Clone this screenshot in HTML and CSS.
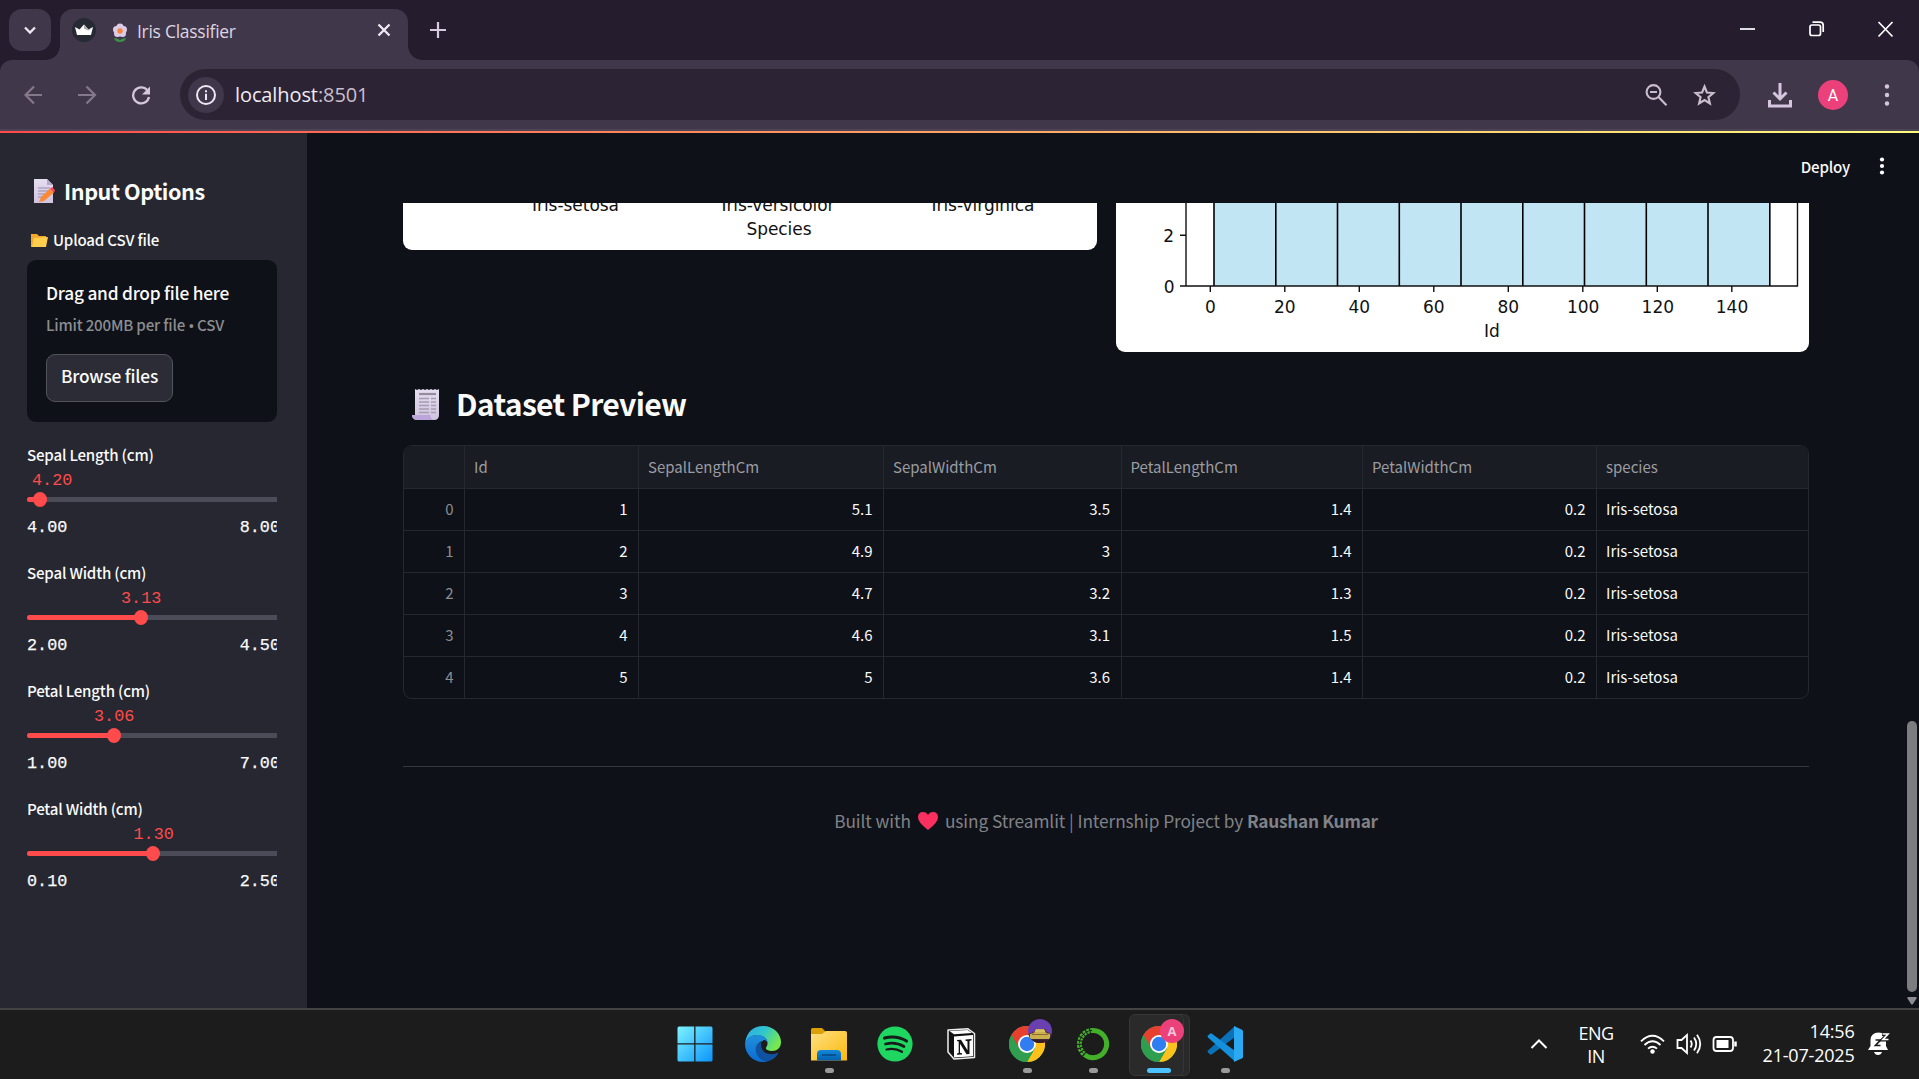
FILE: index.html
```html
<!DOCTYPE html>
<html lang="en">
<head>
<meta charset="utf-8">
<title>Iris Classifier</title>
<link rel="stylesheet" href="styles.css">
</head>
<body>
<svg width="0" height="0" class="defs" aria-hidden="true">
  <defs>
    <linearGradient id="win" x1="0" y1="0" x2="1" y2="1"><stop offset="0" stop-color="#7df3ff"/><stop offset="1" stop-color="#0a95fb"/></linearGradient>
    <linearGradient id="edgeTop" x1="0" y1="0" x2="1" y2=".5"><stop offset="0" stop-color="#2fa8e8"/><stop offset=".5" stop-color="#2fc5cf"/><stop offset="1" stop-color="#76e84f"/></linearGradient>
    <linearGradient id="edgeLow" x1="0" y1="0" x2="0" y2="1"><stop offset="0" stop-color="#2290dc"/><stop offset="1" stop-color="#0a6bd0"/></linearGradient>
    <linearGradient id="folder" x1="0" y1="0" x2="1" y2="1"><stop offset="0" stop-color="#ffe083"/><stop offset="1" stop-color="#fbb90c"/></linearGradient>
    <linearGradient id="folderBlue" x1="0" y1="0" x2="0" y2="1"><stop offset="0" stop-color="#1289dc"/><stop offset="1" stop-color="#0560ae"/></linearGradient>
    <linearGradient id="paper" x1="0" y1="0" x2="0" y2="1"><stop offset="0" stop-color="#e5def0"/><stop offset="1" stop-color="#cfc3de"/></linearGradient>
    <g id="chrome">
      <circle cx="18" cy="18" r="18" fill="#2f9e4f"/>
      <path d="M2.4 9A18 18 0 0 1 33.6 9L18 9.5 10.2 22.5z" fill="#e8402f"/>
      <path d="M33.6 9A18 18 0 0 1 18 36L25.8 22.5 18 9z" fill="#fcc21b"/>
      <path d="M2.4 9A18 18 0 0 0 18 36L25.8 22.5 10.2 22.5z" fill="#2f9e4f"/>
      <circle cx="18" cy="18" r="9" fill="#fff"/><circle cx="18" cy="18" r="7.2" fill="#2f7df0"/>
    </g>
  </defs>
</svg>

<header class="tabstrip">
  <div class="tabsearch"><svg width="42" height="42" viewBox="0 0 42 42"><path d="M16 18.5l5 5 5-5" fill="none" stroke="#eee6f2" stroke-width="2.3"/></svg></div>
  <div class="tab">
    <svg class="favicon" width="24" height="24" viewBox="0 0 24 24"><circle cx="12" cy="12" r="12" fill="#262a33"/><path d="M3 9l4.500 2.500L12 6.500l4.500 5L21 9l-2 8H5z" fill="#fff"/><path d="M12 6.500l4.500 5L21 9l-4.500 3.500-4.500-2z" fill="#aaa"/></svg>
    <svg class="flower" width="16" height="20" viewBox="0 0 16 20"><g fill="#decbe9"><circle cx="8" cy="4" r="3.600"/><circle cx="4.500" cy="6.500" r="3.500"/><circle cx="11.500" cy="6.500" r="3.500"/><circle cx="5.500" cy="10.500" r="3.500"/><circle cx="10.500" cy="10.500" r="3.500"/></g><circle cx="8" cy="8" r="2.700" fill="#f98433"/><path d="M2 15q3 0 6 2 3-2 6-2-1 4-6 4t-6-4z" fill="#3e9146"/></svg>
    <span class="tabtitle">Iris Classifier</span>
    <svg class="tabclose" width="14" height="14" viewBox="0 0 14 14"><path d="M1.500 1.500l11 11M12.500 1.500l-11 11" stroke="#f0e9f4" stroke-width="2.300"/></svg>
  </div>
  <svg class="newtab" width="16" height="16" viewBox="0 0 16 16"><path d="M8 0v16M0 8h16" stroke="#d9c9e0" stroke-width="2.200"/></svg>
  <svg class="winbtns" width="154" height="18" viewBox="0 0 154 18" fill="none" stroke="#fff" stroke-width="1.700"><path d="M0 9h15"/><rect x="70" y="5" width="10.500" height="10.500" rx="2"/><path d="M72.500 2.200H80q3.200 0 3.200 3.200V12"/><path d="M138.500 2l14 14.500M152.500 2l-14 14.500"/></svg>
</header>

<div class="toolbar">
  <svg class="nav" width="130" height="20" viewBox="0 0 130 20" fill="none" stroke-width="2.200"><g stroke="#847989"><path d="M18 10H2M10 1.500L1.500 10l8.500 8.500"/><path d="M54 10h16.500M62.500 1.500L71 10l-8.500 8.500"/></g><path d="M123.300 5.200A8 8 0 1 0 125 12" stroke="#d5c6dc" stroke-width="2.300"/><path d="M126 1.500v8h-8z" fill="#d5c6dc"/></svg>
  <div class="omnibox">
    <div class="info"><svg width="20" height="20" viewBox="0 0 20 20"><circle cx="10" cy="10" r="9" fill="none" stroke="#eee7f1" stroke-width="2"/><path d="M10 8.800v6.200M10 5.200v2" stroke="#eee7f1" stroke-width="2"/></svg></div>
    <span class="url">localhost<span class="port">:8501</span></span>
    <svg class="omniicons" width="72" height="24" viewBox="0 0 72 24" fill="none" stroke="#c9bfcc" stroke-width="2.100"><circle cx="8.500" cy="9" r="6.900"/><path d="M13.500 14l8 8.300M5 9h7"/><path d="M59.500 3.500l2.400 6 6.400.500-4.900 4.100 1.500 6.400-5.400-3.400-5.400 3.400 1.500-6.400L50.700 10l6.400-.500z"/></svg>
  </div>
  <svg class="download" width="24" height="25" viewBox="0 0 24 25" fill="none" stroke="#d5c5df" stroke-width="3"><path d="M12 0v15M5.500 9.500L12 16l6.500-6.500M1.500 17v6h21v-6"/></svg>
  <div class="avatar">A</div>
  <svg class="kebab" width="6" height="24" viewBox="0 0 6 24" fill="#d5c5df"><circle cx="3" cy="3.500" r="2.200"/><circle cx="3" cy="12" r="2.200"/><circle cx="3" cy="20.500" r="2.200"/></svg>
</div>
<div class="rainbow"></div>

<div class="app">
  <aside class="sidebar">
    <h2 class="sidehead"><svg width="22" height="25" viewBox="0 0 22 25"><path d="M1 0h13l6 6v18H1z" fill="url(#paper)"/><path d="M14 0v6h6z" fill="#b6a9c7"/><path d="M5 9h12M5 12h12M5 15h10M5 18h6" stroke="#998ba9"/><path d="M6 23l2-5L17 9.500l4 4L11 22z" fill="#fb8a36"/><path d="M17 9.500l2.200-1.500 3 3.500-1.500 2z" fill="#f4475d"/></svg><span>Input Options</span></h2>
    <div class="label upload"><svg width="17" height="15" viewBox="0 0 17 15"><path d="M0 1h6l2 2h7v11H0z" fill="#f3a72c"/><path d="M3 5l14-1-2 10H1z" fill="#ffce4c"/></svg><span>Upload CSV file</span></div>
    <div class="dropzone">
      <div class="dragtext"><span>Drag and drop file here</span></div>
      <div class="limit"><span>Limit 200MB per file <span class="dot">•</span> CSV</span></div>
      <button class="browse">Browse files</button>
    </div>
    <div class="slider"><div class="label"><span>Sepal Length (cm)</span></div><div class="value" style="margin-left:5px">4.20</div><div class="track"><div class="fill" style="width:12.500px"></div></div><div class="range"><span>4.00</span><span>8.00</span></div></div>
    <div class="slider"><div class="label"><span>Sepal Width (cm)</span></div><div class="value" style="margin-left:94px">3.13</div><div class="track"><div class="fill" style="width:114px"></div></div><div class="range"><span>2.00</span><span>4.50</span></div></div>
    <div class="slider"><div class="label"><span>Petal Length (cm)</span></div><div class="value" style="margin-left:67px">3.06</div><div class="track"><div class="fill" style="width:86.500px"></div></div><div class="range"><span>1.00</span><span>7.00</span></div></div>
    <div class="slider"><div class="label"><span>Petal Width (cm)</span></div><div class="value" style="margin-left:106.500px">1.30</div><div class="track"><div class="fill" style="width:126px"></div></div><div class="range"><span>0.10</span><span>2.50</span></div></div>
  </aside>

  <main class="main">
    <div class="apphead"><span class="deploy">Deploy</span><svg width="6" height="18" viewBox="0 0 6 18" fill="#fff"><circle cx="3" cy="2.500" r="2.100"/><circle cx="3" cy="9" r="2.100"/><circle cx="3" cy="15.500" r="2.100"/></svg></div>
    <div class="charts">
      <svg class="card" width="694" height="47" viewBox="403 203 694 47" font-family="DejaVu Sans" font-size="17" fill="#111">
        <text x="532" y="210.700" textLength="87">Iris-setosa</text><text x="721.500" y="210.700" textLength="113">Iris-versicolor</text><text x="931.500" y="210.700" textLength="103">Iris-virginica</text><text x="746.500" y="234.500" textLength="65">Species</text>
      </svg>
      <svg class="card" width="693" height="149" viewBox="1116 203 693 149" font-family="DejaVu Sans" font-size="17" fill="#111">
        <rect x="1214" y="200" width="556" height="86" fill="#c1e5f3"/>
        <path d="M1214 200v86M1275.800 200v86M1337.500 200v86M1399.300 200v86M1461 200v86M1522.800 200v86M1584.500 200v86M1646.300 200v86M1708 200v86M1769.800 200v86" stroke="#000" stroke-width="1.600"/>
        <path d="M1186 200v86.500M1797.500 200v86.500M1180 286h618M1180 235.300h6M1210.300 286v6M1284.800 286v6M1359.300 286v6M1433.800 286v6M1508.300 286v6M1582.800 286v6M1657.300 286v6M1731.800 286v6" stroke="#111" stroke-width="1.400" fill="none"/>
        <g text-anchor="end"><text x="1174" y="241.800">2</text><text x="1174.500" y="293.200">0</text></g>
        <g text-anchor="middle"><text x="1210.300" y="312.500">0</text><text x="1284.800" y="312.500">20</text><text x="1359.300" y="312.500">40</text><text x="1433.800" y="312.500">60</text><text x="1508.300" y="312.500">80</text><text x="1583.200" y="312.500">100</text><text x="1657.800" y="312.500">120</text><text x="1732" y="312.500">140</text><text x="1491.800" y="336.500">Id</text></g>
      </svg>
    </div>
    <h1 class="heading"><svg width="28" height="33" viewBox="0 0 28 33"><path d="M3 1l2 1 2-1 2 1 2-1 2 1 2-1 2 1 2-1 2 1 2-1 2 1 2-1v26q0 5-5 5H6q-6 0-6-5h3z" fill="url(#paper)"/><path d="M0 27h18q1 5 5 5H6q-6 0-6-5z" fill="#bba5da"/><path d="M7 6h17" stroke="#958d9f" stroke-width="2.200"/><path d="M7 10.500h10M19 10.500h5M7 14h10M19 14h5M7 17.500h10M19 17.500h5M7 21h10M19 21h5M7 24.500h10M19 24.500h5" stroke="#a69db3" stroke-width="1.300"/></svg><span>Dataset Preview</span></h1>
    <div class="table">
      <div class="row head"><div></div><div>Id</div><div>SepalLengthCm</div><div>SepalWidthCm</div><div>PetalLengthCm</div><div>PetalWidthCm</div><div>species</div></div>
      <div class="row"><div>0</div><div>1</div><div>5.1</div><div>3.5</div><div>1.4</div><div>0.2</div><div>Iris-setosa</div></div>
      <div class="row"><div>1</div><div>2</div><div>4.9</div><div>3</div><div>1.4</div><div>0.2</div><div>Iris-setosa</div></div>
      <div class="row"><div>2</div><div>3</div><div>4.7</div><div>3.2</div><div>1.3</div><div>0.2</div><div>Iris-setosa</div></div>
      <div class="row"><div>3</div><div>4</div><div>4.6</div><div>3.1</div><div>1.5</div><div>0.2</div><div>Iris-setosa</div></div>
      <div class="row"><div>4</div><div>5</div><div>5</div><div>3.6</div><div>1.4</div><div>0.2</div><div>Iris-setosa</div></div>
    </div>
    <hr class="rule">
    <footer class="credit"><span>Built with</span><svg width="20" height="18" viewBox="0 0 20 18"><path d="M10 18Q0 10.500 0 5.500 0 0 5 0q3.500 0 5 3 1.500-3 5-3 5 0 5 5.500 0 5-10 12.500z" fill="#f92f60"/></svg><span>using Streamlit | Internship Project by <b>Raushan Kumar</b></span></footer>
    <div class="scroll"><div class="thumb"></div><svg width="10" height="8" viewBox="0 0 10 8"><path d="M1 0h8q1 0 .500 1.500L6 7q-1 1-2 0L.500 1.500Q0 0 1 0z" fill="#8b8c8f"/></svg></div>
  </main>
</div>

<div class="taskbar">
  <div class="apps">
    <div class="slot first"><svg width="36" height="36" viewBox="0 0 36 36"><path d="M2 .500h15.200v16.700H.500V2Q.500.500 2 .500zM18.500.500H34q1.500 0 1.500 1.500v15.200h-17zM.500 18.500h16.700v17H2Q.500 35.500.500 34zM18.500 18.500h17V34q0 1.500-1.500 1.500H18.500z" fill="url(#win)"/></svg></div>
    <div class="slot"><svg width="36" height="36" viewBox="0 0 36 36"><path d="M0 17C2 5 9 0 18 0c11 0 18 8 18 16 0 6-4 9-9 9-5 0-7-2-6-4 3-5 1-9-4-11C10 8 3 10 0 17z" fill="url(#edgeTop)"/><path d="M0 18C1 12 6 9 12 9c8 0 12 5 10 11-1-4-5-6-8-3-5 6 0 16 8 18.500Q20 36 18 36C8 36 0 28 0 18z" fill="url(#edgeLow)"/><path d="M14 17C8 20 10 33 21 35.700c5-.700 9-3.500 12-7.700q.500-1.500-1-1c-7 3-13 0-15-4-1-2-1-4 0-7z" fill="#0f529f"/><path d="M17 15.500q3-3 5 .500 1 3-1 5.500-1 3 4 3.700-5 .300-7.500-3.200-2-3.500-.500-6.500z" fill="#1c1c1c"/></svg></div>
    <div class="slot running"><svg width="36" height="36" viewBox="0 0 36 36"><path d="M0 3.500Q0 2 1.500 2H11l4 4-3 3H0z" fill="#dda006"/><path d="M0 8h11l4-3h19q2 0 2 2v27.500H0z" fill="url(#folder)"/><path d="M6 34.500V28q0-4 4-4h16q4 0 4 4v6.500z" fill="url(#folderBlue)"/><path d="M11 29h14" stroke="#06477e" stroke-width="1.500"/></svg></div>
    <div class="slot"><svg width="36" height="36" viewBox="0 0 36 36"><circle cx="18" cy="18" r="17.600" fill="#1fd760"/><g fill="none" stroke="#171c1b" stroke-linecap="round"><path d="M7.500 12q12-3 22 3" stroke-width="3.200"/><path d="M8.500 18q10-2.500 18.500 2.500" stroke-width="2.700"/><path d="M9.500 23.500q8.500-2 15.500 2.300" stroke-width="2.200"/></g></svg></div>
    <div class="slot"><svg width="36" height="36" viewBox="0 0 36 36"><path d="M5 4l20-1.200L31.500 7.500v24L11 33 5 26z" fill="#111" stroke="#eee" stroke-width="1.500" stroke-linejoin="round"/><path d="M6.500 5L24.500 4l4.500 3-18 1.200z" fill="#fff"/><path d="M11 10.500L30 9v21.300L11 31.500z" fill="#fff"/><path d="M14 14l4-.300 6.500 10.500v-9l-2-.500v-1.200l6-.400v1.200l-2 .600v13l-3 .300-6.500-10.500v9l2 .500v1.200l-5 .300v-1.200l1.700-.500V15.500L14 15z" fill="#111"/></svg></div>
    <div class="slot running"><svg width="36" height="36" viewBox="0 0 36 36"><use href="#chrome"/></svg><svg class="badge" width="24" height="24" viewBox="0 0 24 24"><clipPath id="round"><circle cx="12" cy="12" r="12"/></clipPath><g clip-path="url(#round)"><path d="M0 0h24v24H0z" fill="#6a40b0"/><path d="M0 15l6-2 2-3h9l2 3 5 2v9H0z" fill="#513040"/><path d="M2 15l4-1 2-4h8l2 4 4 1v5H2z" fill="#c9b04d"/><path d="M4 15.500h16" stroke="#8c6b35"/><path d="M7 12h10" stroke="#e6d27a"/><path d="M0 20.500h24v3.500H0z" fill="#351c26"/></g></svg></div>
    <div class="slot running"><svg width="36" height="36" viewBox="0 0 36 36" fill="none"><path d="M18 4.400A13.600 13.600 0 1 1 9.500 28.600" stroke="#43b02a" stroke-width="5"/><path d="M18 4.400A13.600 13.600 0 0 0 9.500 28.600" stroke="#43b02a" stroke-width="5" stroke-dasharray="2.600 1.100"/><path d="M17 4.400A13.600 13.600 0 0 0 9.500 28.600" stroke="#1c1c1c" stroke-width="1" stroke-dasharray="2 1.500"/></svg></div>
    <div class="slot active"><svg width="36" height="36" viewBox="0 0 36 36"><use href="#chrome"/></svg><div class="badge pink">A</div></div>
    <div class="slot running"><svg width="36" height="36" viewBox="0 0 36 36"><path d="M1 24.500Q0 25.500 1 26.500l2 1.800q1 .700 2 0L28 11V0z" fill="#0a72b8"/><path d="M1 11.500Q0 10.500 1 9.500l2-1.800q1-.700 2 0L28 25v10.500z" fill="#1490dc"/><path d="M27 0l8 3.700q1 .500 1 1.500v25.600q0 1-1 1.500L27 36z" fill="#2baaf3"/></svg></div>
  </div>
  <div class="tray">
    <svg class="chev" width="18" height="12" viewBox="0 0 18 12"><path d="M1.500 10L9 2.500l7.500 7.500" fill="none" stroke="#fff" stroke-width="2"/></svg>
    <div class="lang">ENG<br>IN</div>
    <svg class="status" width="98" height="24" viewBox="0 0 98 24" fill="none" stroke="#fff" stroke-width="1.800"><path d="M1 9.300q11.500-11 23 0M4.500 13q8-7.500 16 0M8 16.700q4.500-4 9 0"/><circle cx="12.500" cy="19.500" r="2.200" fill="#fff" stroke="none"/><path d="M37.500 8h4l5.500-5v18l-5.500-5h-4zM50.500 8.500q2.500 3.500 0 7M54 5.500q4.500 6.500 0 13M57 2.800q6.500 9.200 0 18.400"/><rect x="73.500" y="5" width="19.500" height="14" rx="3"/><path d="M76.500 8h12v8h-12z" fill="#fff" stroke="none"/><path d="M95.500 9.500v5" stroke-width="2.500"/></svg>
    <div class="clock">14:56<br>21-07-2025</div>
    <svg class="bell" width="22" height="25" viewBox="0 0 22 25"><path d="M0 19l2.500-4V9Q3 1.500 10.500 1.500T18 9v6l2 4z" fill="#fff"/><path d="M6 21h8q-1 3-4 3t-4-3z" fill="#fff"/><path d="M7.500 9h5l-5 5.500h5" stroke="#1c1c1c" stroke-width="1.700" fill="none"/><path d="M14 3h6.500L15 8.500h6" stroke="#1c1c1c" stroke-width="4" fill="none"/><path d="M14.500 3h5.500L15 8.500h5.500" stroke="#fff" stroke-width="1.700" fill="none"/></svg>
  </div>
</div>
</body>
</html>
```
FILE: styles.css
```css
* { box-sizing: border-box; }
body { margin: 0; width: 1919px; height: 1079px; overflow: hidden; background: #251c2e; color: #fafafa; font-family: "Noto Sans CJK SC", "Noto Sans", sans-serif; }
svg { display: block; flex: none; }
.defs { position: absolute; }
span, .row > div { white-space: nowrap; }

.tabstrip { height: 60px; background: #251c2e; display: flex; align-items: flex-start; padding: 9px 0 0 9px; }
.tabsearch { width: 42px; height: 42px; border-radius: 13px; background: #41374a; }
.tab { position: relative; width: 348px; height: 51px; margin-left: 9px; background: #41374a; border-radius: 13px 13px 0 0; display: flex; align-items: flex-start; padding-left: 12px; }
.tab::before, .tab::after { content: ""; position: absolute; bottom: 0; width: 14px; height: 14px; }
.tab::before { left: -14px; background: radial-gradient(circle at 0 0, transparent 13.500px, #41374a 14px); }
.tab::after { right: -14px; background: radial-gradient(circle at 100% 0, transparent 13.500px, #41374a 14px); }
.favicon { margin-top: 9px; }
.flower { margin: 14px 0 0 16px; }
.tabtitle { font: 17.500px/26px "Open Sans", sans-serif; color: #ded4e2; margin: 9px 0 0 9px; width: 99px; letter-spacing: -0.280px; }
.tabclose { margin: 14px 0 0 141px; }
.newtab { margin: 13px 0 0 22px; }
.winbtns { margin: 11px 0 0 1294px; }

.toolbar { height: 71px; background: #41374a; border-radius: 12px 12px 0 0; border-bottom: 2px solid #4c4355; display: flex; align-items: flex-start; padding-left: 24px; }
.nav { margin-top: 25px; }
.omnibox { width: 1560px; height: 51px; margin: 9px 0 0 26px; border-radius: 26px; background: #2c2335; display: flex; align-items: center; padding-left: 8px; }
.info { width: 36px; height: 36px; border-radius: 50%; background: #41374a; display: grid; place-items: center; }
.url { font: 20px/28px "Open Sans", sans-serif; color: #f1eaf4; margin-left: 11px; width: 132px; letter-spacing: -0.100px; }
.port { color: #c9bfcc; }
.omniicons { margin-left: 1277.500px; }
.download { margin: 23px 0 0 28px; }
.avatar { width: 30px; height: 30px; margin: 20px 0 0 26px; border-radius: 50%; background: #ec407a; text-align: center; font: 16px/31px Roboto, sans-serif; color: #fff; }
.kebab { margin: 23px 0 0 36px; }
.rainbow { height: 2px; background: linear-gradient(90deg, #ff4b4b, #fffd80); }

.app { height: 875px; display: flex; }
.sidebar { width: 307px; height: 875px; background: #262730; padding: 46px 30px 0 27px; overflow: hidden; }
.sidehead { margin: 0; height: 25px; display: flex; align-items: center; gap: 9px; padding-left: 6px; font-size: 21.600px; line-height: 25px; font-weight: 700; letter-spacing: -0.420px; }
.sidehead span { margin-top: -2px; }
.label { height: 24px; display: flex; align-items: center; font-size: 15.100px; line-height: 24px; font-weight: 500; letter-spacing: -0.200px; }
.upload { margin-top: 24px; gap: 5px; padding-left: 4px; }
.upload span { margin-top: -2px; }
.dropzone { height: 162px; margin-top: 8px; background: #0e1117; border-radius: 9px; padding: 19px 0 0 19px; }
.dragtext { font-size: 17.300px; line-height: 28px; font-weight: 500; letter-spacing: -0.220px; }
.limit { font-size: 15.100px; line-height: 24px; margin-top: 5px; color: #8b8d91; font-weight: 500; letter-spacing: -0.180px; }
.dot { font-family: "Noto Sans", sans-serif; line-height: 1; }
.browse { display: block; width: 127px; height: 48px; margin: 18px 0 0; padding: 0 0 4px; border: 1px solid #52535b; border-radius: 9px; background: #2b2c36; color: #fafafa; font: 500 17.300px/42px "Noto Sans CJK SC", sans-serif; letter-spacing: -0.200px; }
.slider { height: 118px; width: 250px; overflow: hidden; }
.dropzone + .slider { margin-top: 20px; }
.value { height: 24px; margin-top: 2px; font: 16.800px/26px "Liberation Mono", monospace; color: #ff4b4b; }
.track { height: 5px; margin-top: 5px; background: #4b4c57; border-radius: 3px 0 0 3px; }
.fill { position: relative; height: 5px; background: #ff4b4b; border-radius: 3px; }
.fill::after { content: ""; position: absolute; right: -7px; top: -5px; width: 14px; height: 15px; border-radius: 50%; background: #ff4b4b; }
.range { display: flex; justify-content: space-between; width: 253px; margin-top: 14px; font: 16.800px/24px "Liberation Mono", monospace; -webkit-text-stroke: 0.250px #fafafa; }

.main { position: relative; width: 1612px; height: 875px; padding: 0 110px 0 96px; background: #0e1117; }
.apphead { height: 70px; display: flex; align-items: center; justify-content: flex-end; gap: 29px; margin-right: -76px; padding-bottom: 4px; font-size: 15.100px; font-weight: 500; letter-spacing: -0.200px; }
.deploy { margin-top: -1px; }
.charts { display: flex; align-items: flex-start; gap: 19px; height: 149px; }
.card { background: #fff; border-radius: 0 0 9px 9px; }
.heading { margin: 36px 0 0; height: 33px; padding-left: 9px; display: flex; align-items: center; gap: 16px; font-size: 30.200px; line-height: 33px; font-weight: 700; letter-spacing: -0.700px; }
.heading span { margin-top: -2px; }
.table { margin-top: 24px; height: 254px; border: 1px solid #26282f; border-radius: 9px; overflow: hidden; }
.row { display: grid; grid-template-columns: 61px 174px 245px 237.500px 241.500px 234px 1fr; height: 42px; border-bottom: 1px solid #26282f; font-size: 15px; line-height: 40px; }
.row > div { border-right: 1px solid #26282f; padding: 0 10.500px; text-align: right; }
.row > div:first-child { color: #8b8d92; }
.row > div:last-child { border-right: 0; text-align: left; padding-left: 9px; }
.row:last-child { border-bottom: 0; }
.row.head { height: 43px; background: #1a1c24; color: #9a9ca2; line-height: 42px; }
.row.head > div { text-align: left; padding-left: 9px; }
.rule { height: 1px; border: 0; background: #36383e; margin: 67px 0 0; }
.credit { display: flex; align-items: center; justify-content: center; gap: 7px; margin-top: 39px; height: 30px; color: #808287; font-size: 17.300px; letter-spacing: -0.080px; }
.credit span { margin-top: -2px; }
.credit b { letter-spacing: -0.300px; }
.scroll { position: absolute; right: 2px; top: 588px; width: 10px; }
.thumb { height: 271px; margin-bottom: 5px; border-radius: 5px; background: #7c7d80; }

.taskbar { height: 71px; background: #1c1c1c; border-top: 2px solid #434343; display: flex; font-family: "Open Sans", sans-serif; }
.apps { display: flex; margin-left: 664px; }
.slot { position: relative; width: 66px; height: 69px; padding: 16px 0 0 15px; }
.first { padding-left: 13px; }
.slot > svg, .badge { position: relative; }
.slot .badge { position: absolute; left: 34px; top: 9px; }
.pink { width: 24px; height: 24px; border-radius: 50%; background: #ec407a; color: #f7c6d9; text-align: center; font: 700 13px/25px "Open Sans", sans-serif; }
.running::after, .active::after { content: ""; position: absolute; bottom: 6px; left: 29px; width: 9px; height: 5px; border-radius: 3px; background: #9a9a9a; }
.active::after { left: 21px; width: 24px; background: #4cc2ff; }
.active::before { content: ""; position: absolute; left: 3px; top: 4px; width: 53px; height: 60px; background: #2a2a2a; border: 1px solid #363636; border-radius: 6px; box-shadow: 6px 0 0 -1px #292929, 6px 0 0 0 #363636; }
.tray { display: flex; margin-left: 272px; font-size: 18px; line-height: 23px; color: #fff; }
.chev { margin-top: 28px; }
.lang { width: 60px; margin: 12px 0 0 18px; text-align: center; letter-spacing: -0.500px; }
.status { margin: 22px 0 0 14px; }
.clock { width: 100px; margin: 9px 0 0 16.500px; text-align: right; line-height: 24px; letter-spacing: -0.200px; }
.bell { margin: 21px 0 0 13.500px; }
```
